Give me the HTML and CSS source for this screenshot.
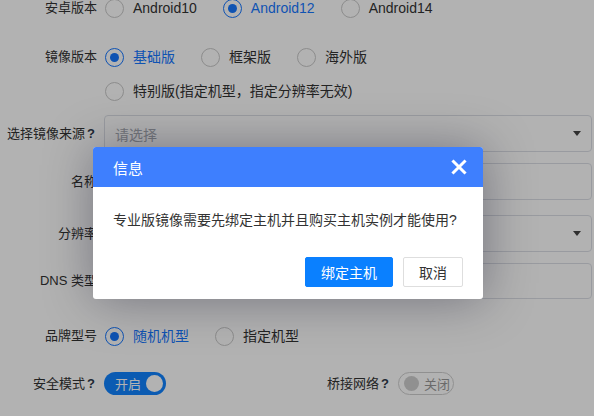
FILE: index.html
```html
<!DOCTYPE html>
<html lang="zh">
<head>
<meta charset="utf-8">
<link rel="stylesheet" href="styles.css">
</head>
<body>
<form class="form">
  <div class="row r1">
    <label class="lbl">安卓版本</label>
    <div class="radios">
      <span class="radio"><i class="dot"></i>Android10</span>
      <span class="radio on"><i class="dot"></i>Android12</span>
      <span class="radio"><i class="dot"></i>Android14</span>
    </div>
  </div>
  <div class="row r2">
    <label class="lbl">镜像版本</label>
    <div class="radios">
      <span class="radio on"><i class="dot"></i>基础版</span>
      <span class="radio"><i class="dot"></i>框架版</span>
      <span class="radio"><i class="dot"></i>海外版</span>
    </div>
  </div>
  <div class="row r3">
    <label class="lbl"></label>
    <div class="radios">
      <span class="radio"><i class="dot"></i>特别版(指定机型，指定分辨率无效)</span>
    </div>
  </div>
  <div class="row r4">
    <label class="lbl help">选择镜像来源<b class="q">?</b></label>
    <div class="field select"><span class="ph">请选择</span><i class="caret"></i></div>
  </div>
  <div class="row r5">
    <label class="lbl">名称</label>
    <div class="field"></div>
  </div>
  <div class="row r6">
    <label class="lbl">分辨率</label>
    <div class="field select"><span class="ph"></span><i class="caret"></i></div>
  </div>
  <div class="row r7">
    <label class="lbl">DNS 类型</label>
    <div class="pair">
      <div class="field half"></div>
      <div class="field half"></div>
    </div>
  </div>
  <div class="row r8">
    <label class="lbl">品牌型号</label>
    <div class="radios">
      <span class="radio on"><i class="dot"></i>随机机型</span>
      <span class="radio"><i class="dot"></i>指定机型</span>
    </div>
  </div>
  <div class="row r9">
    <div class="col">
      <label class="lbl help">安全模式<b class="q">?</b></label>
      <span class="switch on"><span class="sw-text">开启</span><i class="knob"></i></span>
    </div>
    <div class="col">
      <label class="lbl help">桥接网络<b class="q">?</b></label>
      <span class="switch off"><i class="knob"></i><span class="sw-text">关闭</span></span>
    </div>
  </div>
</form>

<div class="shade"></div>

<div class="dialog">
  <div class="dlg-head">
    <span class="dlg-title">信息</span>
    <svg class="dlg-close" width="16" height="16" viewBox="0 0 16 16"><path d="M2.5 2.5 L13.5 13.5 M13.5 2.5 L2.5 13.5" stroke="#fff" stroke-width="3" stroke-linecap="square"/></svg>
  </div>
  <div class="dlg-body">专业版镜像需要先绑定主机并且购买主机实例才能使用?</div>
  <div class="dlg-foot">
    <button type="button" class="btn primary">绑定主机</button>
    <button type="button" class="btn">取消</button>
  </div>
</div>
</body>
</html>
```
FILE: styles.css
```css
* { box-sizing: border-box; }
html, body { margin: 0; padding: 0; }
body {
  width: 594px;
  height: 416px;
  overflow: hidden;
  background: #fff;
  font-family: "Liberation Sans", "Noto Sans CJK SC", sans-serif;
  font-size: 14px;
  color: #333;
  position: relative;
}
.form { padding-top: 0; }
.row { display: flex; align-items: center; }
.lbl {
  width: 97px;
  flex: none;
  text-align: right;
  margin-right: 7px;
  color: #333;
  font-size: 13px;
  line-height: 20px;
  white-space: nowrap;
}
.lbl.help { padding-right: 2px; }
.q { font-weight: bold; font-size: 13px; color: #2f3a4a; margin-left: 2px; }
.r1 { margin-top: -2px; }
.r2 { margin-top: 29px; }
.r3 { margin-top: 14px; }
.r4 { margin-top: 14px; }
.r5 { margin-top: 11px; }
.r6 { margin-top: 15px; }
.r7 { margin-top: 11px; }
.r8 { margin-top: 27px; }
.r9 { margin-top: 26px; }

.radios { display: flex; align-items: center; gap: 26px; padding-left: 1px; }
.radio { display: flex; align-items: center; line-height: 20px; color: #333; white-space: nowrap; }
.radio .dot {
  width: 19px; height: 19px;
  border: 1px solid #c9c9c9;
  border-radius: 50%;
  margin-right: 9px;
  display: flex; align-items: center; justify-content: center;
  background: #fff;
}
.radio.on { color: #1677ff; }
.radio.on .dot { border-color: #1677ff; }
.radio.on .dot::after {
  content: ""; width: 9px; height: 9px; border-radius: 50%; background: #1677ff;
}

.field {
  width: 488px;
  height: 37px;
  border: 1px solid #dcdfe6;
  border-radius: 4px;
  background: #fff;
  display: flex;
  align-items: center;
  padding: 0 10px;
  position: relative;
}
.ph { color: #a8abb2; flex: 1; }
.caret {
  width: 0; height: 0;
  border-left: 4px solid transparent;
  border-right: 4px solid transparent;
  border-top: 5px solid #444;
}
.pair { display: flex; gap: 100px; }
.field.half { width: 194px; height: 36px; }

.col { display: flex; align-items: center; width: 294px; }
.switch {
  display: flex; align-items: center; flex: none;
  height: 23px; border-radius: 12px;
  font-size: 13px; white-space: nowrap;
}
.switch .knob { flex: none; border-radius: 50%; }
.switch.on { width: 62px; background: #1183ff; color: #fff; padding: 0 3px 0 11px; justify-content: space-between; }
.switch.on .knob { width: 17px; height: 17px; background: #fff; }
.switch.off { width: 56px; border: 1px solid #cfcfcf; color: #999; padding: 0 3px 0 5px; gap: 5px; background: #fff; }
.switch.off .knob { width: 15px; height: 15px; background: #cfcfcf; }

.shade {
  position: absolute; inset: 0;
  background: rgba(0, 0, 0, 0.3);
}

.dialog {
  position: absolute;
  left: 93px; top: 147px;
  width: 390px; height: 152px;
  background: #fff;
  border-radius: 3px;
  box-shadow: 1px 1px 50px rgba(0, 0, 30, 0.35);
  display: flex; flex-direction: column;
  overflow: hidden;
}
.dlg-head {
  height: 40px; background: #3e7ffe;
  display: flex; align-items: center; justify-content: space-between;
  padding: 0 16px 0 20px;
}
.dlg-title { color: #fff; font-size: 15px; }
.dlg-body { padding: 23px 20px 0 20px; line-height: 20px; color: #333; font-size: 14px; height: 70px; }
.dlg-foot { display: flex; justify-content: flex-end; gap: 10px; padding: 0 20px; }
.btn {
  height: 30px; border-radius: 2px;
  font-family: "Liberation Sans", "Noto Sans CJK SC", sans-serif;
  font-size: 14px;
  border: 1px solid #dedede; background: #fff; color: #333;
  width: 60px; padding: 0;
}
.btn.primary { width: 88px; background: #0a80ff; border-color: #0a80ff; color: #fff; }
```
